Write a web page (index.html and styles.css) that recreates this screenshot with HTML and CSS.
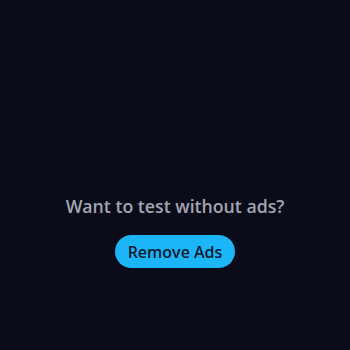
FILE: index.html
```html
<!DOCTYPE html>
<html lang="en">
<head>
  <meta charset="UTF-8">
  <meta name="viewport" content="width=device-width, initial-scale=1.0">
  <title>Remove Ads</title>
  <link rel="stylesheet" href="styles.css">
</head>
<body>
  <div class="promo">
    <div class="promo-text">Want to test without ads?</div>
    <button class="promo-btn">Remove Ads</button>
  </div>
</body>
</html>
```

FILE: styles.css
```css
body {
  margin: 0;
  padding: 0;
  background: #0a0c19;
  font-family: 'Open Sans', Arial, sans-serif;
  min-height: 100vh;
}
.promo {
  display: flex;
  flex-direction: column;
  align-items: center;
  padding-top: 194px;
}
.promo-text {
  color: #a3a5b2;
  font-size: 17.7px;
  font-weight: 600;
  line-height: 24px;
}
.promo-btn {
  margin-top: 17px;
  height: 33px;
  width: 120px;
  padding: 0;
  border: none;
  border-radius: 17px;
  background: #1cb5f7;
  color: #0c1a2e;
  font-family: inherit;
  font-size: 16px;
  font-weight: 600;
}
```
